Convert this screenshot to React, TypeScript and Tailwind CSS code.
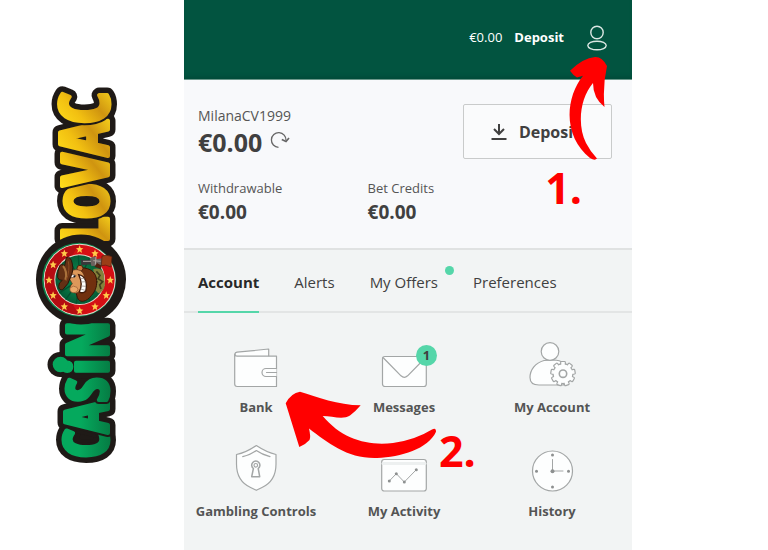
import { useState } from "react";
import type { ReactNode } from "react";

interface Tab {
  id: string;
  label: string;
  hasNews?: boolean;
}

interface Shortcut {
  label: string;
  icon: ReactNode;
  badge?: number;
}

interface LogoLetter {
  char: string;
  size: number;
  x: number;
  y: number;
  fill: string;
}

const tabs: Tab[] = [
  { id: "account", label: "Account" },
  { id: "alerts", label: "Alerts" },
  { id: "offers", label: "My Offers", hasNews: true },
  { id: "preferences", label: "Preferences" },
];

// The wordmark reads upwards: x is the baseline, y is where the letter starts
const letters: LogoLetter[] = [
  { char: "C", size: 62, x: 108, y: 458, fill: "url(#green)" },
  { char: "A", size: 60, x: 108, y: 433, fill: "url(#green)" },
  { char: "S", size: 58, x: 108, y: 402, fill: "url(#green)" },
  { char: "i", size: 60, x: 108, y: 374, fill: "url(#green)" },
  { char: "N", size: 58, x: 108, y: 358, fill: "url(#green)" },
  { char: "L", size: 64, x: 108, y: 243, fill: "url(#gold)" },
  { char: "O", size: 60, x: 108, y: 219, fill: "url(#gold)" },
  { char: "V", size: 64, x: 108, y: 186, fill: "url(#gold)" },
  { char: "A", size: 66, x: 108, y: 156, fill: "url(#gold)" },
  { char: "C", size: 68, x: 109, y: 124, fill: "url(#gold)" },
];

const starAngles = [0, 30, 60, 90, 120, 150, 180, 210, 240, 270, 300];

function Letter({ letter, stroke, width }: { letter: LogoLetter; stroke: string; width: number }) {
  return (
    <text
      transform={`translate(${letter.x} ${letter.y}) rotate(-90)`}
      fontSize={letter.size}
      fill={letter.fill}
      stroke={stroke}
      strokeWidth={width}
      strokeLinejoin="round"
      className="font-['Open_Sans_Condensed','Roboto_Condensed',sans-serif] font-bold"
    >
      {letter.char}
    </text>
  );
}

function Logo() {
  return (
    <svg viewBox="30 80 105 390" className="w-[105px] shrink-0" role="img" aria-label="Casino Lovac">
      <defs>
        <linearGradient id="gold" x1="0" y1="0" x2="0.3" y2="1">
          <stop offset="0.2" stopColor="#ffdf1c" />
          <stop offset="0.5" stopColor="#f2c011" />
          <stop offset="0.75" stopColor="#cf9410" />
          <stop offset="1" stopColor="#f0c81a" />
        </linearGradient>
        <linearGradient id="green" x1="0" y1="0" x2="0" y2="1">
          <stop offset="0.45" stopColor="#05a95d" />
          <stop offset="0.95" stopColor="#066b3a" />
        </linearGradient>
        <radialGradient id="field">
          <stop offset="0.2" stopColor="#0a8a50" />
          <stop offset="1" stopColor="#045b35" />
        </radialGradient>
      </defs>
      <path d="M76 105h26v130h-26zM76 320h26v128h-26z" fill="#1f1a17" />
      <circle cx="60" cy="364.5" r="12.500" fill="#1f1a17" />
      {letters.map((letter, i) => (
        <Letter key={i} letter={letter} stroke="#1f1a17" width={15} />
      ))}
      {letters.map((letter, i) => (
        <g key={i}>
          <Letter letter={letter} stroke="#1f1a17" width={8} />
          <Letter letter={letter} stroke={letter.fill} width={4} />
        </g>
      ))}
      <circle cx="60.500" cy="364.5" r="7.800" fill="#05a95d" />

      <circle cx="81" cy="279.5" r="45" fill="#1f1a17" />
      <g transform="translate(30 200) scale(0.3333)">
        <circle cx="147" cy="239" r="111" fill="#0b7f49" />
        <circle cx="149" cy="239" r="108" fill="#e9d5cd" />
        <circle cx="149" cy="239" r="105" fill="#d40f14" />
        <path d="M149 134a105 105 0 0 0 0 210a160 160 0 0 1 0-210z" fill="#b50c12" />
        <circle cx="149" cy="239" r="76" fill="#e9d5cd" />
        <circle cx="149" cy="239" r="73" fill="url(#field)" />
        <g stroke="#04502f" strokeWidth="4">
          <path d="M149 239L115 175M149 239L145 167M149 239L178 174M149 239L90 196M149 239L88 279M149 239L107 299M149 239L139 311M149 239L180 304M149 239L212 275" />
        </g>
        {starAngles.map((angle) => (
          <g key={angle} transform={`rotate(${angle} 149 239)`}>
            <path
              d="M241 228l3 8 8 1-6 5 2 9-7-5-7 5 2-9-6-5 8-1z"
              fill="#ffc94a"
              transform={`rotate(${-angle} 241 239)`}
            />
          </g>
        ))}
        {/* jacket */}
        <path d="M190 207q22-5 31 12l4 34q-3 24-20 27l-12-13z" fill="#84813b" />
        <path d="M199 214l11 12-6 10 14 9-9 10 4 12M190 243l13 3" fill="none" stroke="#403d1c" strokeWidth="5" />
        {/* rifle */}
        <path d="M152 180l29-1 2 14-29 3z" fill="#38383a" />
        <path d="M180 174l17-5 2 8 20-2-3 22-32 1z" fill="#6b625f" />
        <path d="M159 184h24M190 182l22 2M198 171l-2 23" stroke="#b0a8a1" strokeWidth="3" />
        <path d="M216 168q14-5 30 2l-3 31q-17-9-29-4z" fill="#9b3d17" stroke="#51200e" strokeWidth="2" />
        <path d="M201 189l14 8-2 10-19-7z" fill="#51200e" />
        {/* beard and face */}
        <path d="M145 204c27-3 49 7 54 30c4 21-2 39-15 53c-15 19-32 21-39 11c-6-8-3-17-11-25z" fill="#71300f" stroke="#351407" strokeWidth="3" />
        <circle cx="150" cy="205" r="9" fill="#c8763c" stroke="#4a210d" strokeWidth="3" />
        <path d="M121 216q13-12 31-4q15 10 10 33q-5 25-17 32q-10 7-18-3q-13-10 0-23l-7-12z" fill="#dc985a" stroke="#593018" strokeWidth="2" />
        <path d="M146 224q14 2 20 16q6 15 1 34q-10 8-19 1q12-22-2-51z" fill="#fff" stroke="#421b0a" strokeWidth="4" />
        <path d="M150 235l14 1M154 246l14-1M154 258l14 1M151 267l14 4" stroke="#8c7d75" strokeWidth="2" />
        <path d="M122 226q8-6 16 1q-2 8-14 6z" fill="#fff" stroke="#593018" strokeWidth="2" />
        <circle cx="133" cy="229" r="3" fill="#111" />
        <path d="M120 264q10-10 21-2q7 8-2 14q-15 6-19-5z" fill="#eba969" stroke="#94572f" strokeWidth="2" />
        {/* hat */}
        <path d="M109 178q14-4 18 20q4 23-5 38q-5 22-24 39q-10 3-12-9q-1-12 11-19q-12 1-14-9q-1-20 6-34q4-8 15-1z" fill="#633014" stroke="#2d1408" strokeWidth="3" transform="translate(0 -6)" />
        <path d="M99 198q14 16 7 41" fill="none" stroke="#a9713b" strokeWidth="6" />
        <path d="M115 184q6 26-7 59" fill="none" stroke="#8c4b21" strokeWidth="3" />
      </g>
    </svg>
  );
}

function Icon({ children }: { children: ReactNode }) {
  return (
    <svg
      viewBox="0 0 50 50"
      className="size-[50px] overflow-visible"
      fill="#fdfefe"
      stroke="#a3a6a6"
      strokeWidth="1.2"
      strokeLinecap="round"
      strokeLinejoin="round"
      aria-hidden="true"
    >
      {children}
    </svg>
  );
}

const gearTeeth = [0, 40, 80, 120, 160, 200, 240, 280, 320];

const shortcuts: Shortcut[] = [
  {
    label: "Bank",
    icon: (
      <Icon>
        <path d="M4 15.5V13q0-1.500 2-1.800L37.700 8v7.500" />
        <path d="M3.700 13q0 2.200 2.500 2.200h39.300V45.500H6.200q-2.500 0-2.500-2.500z" />
        <path d="M45.500 27.500H35a4 4 0 0 0 0 8h10.500M45.500 31.500h-10" />
      </Icon>
    ),
  },
  {
    label: "Messages",
    badge: 1,
    icon: (
      <Icon>
        <rect x="3.500" y="15.500" width="43.800" height="30" rx="2.500" />
        <path d="M4 16.500l18 18.300q3.300 3 6.600 0l18-18.300" />
      </Icon>
    ),
  },
  {
    label: "My Account",
    icon: (
      <Icon>
        <path d="M17 19.500C8 22 3 29 3 36.500q0 7.500 9 7.500h25V22q-5-3-9-3z" />
        <circle cx="23" cy="10.500" r="8.800" />
        <path d="M31 23q2-3 6-2v8z" stroke="none" />
        {gearTeeth.map((angle) => (
          <rect key={angle} x="33.700" y="20.500" width="4.600" height="8" rx="0.800" transform={`rotate(${angle} 36 32.700)`} />
        ))}
        <circle cx="36" cy="32.700" r="10" />
        {gearTeeth.map((angle) => (
          <rect key={angle} x="34.300" y="21.700" width="3.400" height="3" stroke="none" transform={`rotate(${angle} 36 32.700)`} />
        ))}
        <circle cx="36" cy="32.700" r="3.700" strokeWidth="1.600" />
      </Icon>
    ),
  },
  {
    label: "Gambling Controls",
    icon: (
      <Icon>
        <path d="M25.300 0.500Q36 7.500 45 9.500V19q0 17-14 23.500l-5.700 2.800-5.700-2.800Q5.500 36 5.500 19V9.500Q15 7.500 25.300 0.500z" />
        <path d="M11.700 11.700Q20 9.500 25.300 5.500 31 9.500 39 11.700" fill="none" />
        <path d="M22.400 23.500a4.100 4.100 0 1 1 4.800 0l1.500 8.200h-8z" strokeWidth="1.500" />
        <circle cx="24.800" cy="20.300" r="1.800" />
      </Icon>
    ),
  },
  {
    label: "My Activity",
    icon: (
      <Icon>
        <rect x="2.700" y="14.500" width="44.600" height="31.500" rx="2.500" />
        <path d="M4 18.500h42" stroke="#edf0f0" strokeWidth="3" />
        <path d="M10.300 36l7-7.300 8 8.300 12-12.300" fill="none" strokeWidth="1" />
        <g fill="#8d9090" stroke="none">
          <circle cx="10.300" cy="36" r="1.500" />
          <circle cx="17.300" cy="28.700" r="1.500" />
          <circle cx="25.300" cy="37" r="1.500" />
          <circle cx="37.300" cy="24.700" r="1.500" />
        </g>
      </Icon>
    ),
  },
  {
    label: "History",
    icon: (
      <Icon>
        <circle cx="25.500" cy="26" r="20" />
        <path d="M25.500 26V14.500M25.500 26h10.500" strokeWidth="1" />
        <g fill="#8d9090" stroke="none">
          <circle cx="25.500" cy="26.300" r="2" />
          <circle cx="25.500" cy="10" r="1.500" />
          <circle cx="25.500" cy="42" r="1.500" />
          <circle cx="9.500" cy="26.300" r="1.500" />
          <circle cx="41.500" cy="26.300" r="1.500" />
        </g>
      </Icon>
    ),
  },
];

function Header() {
  return (
    <header className="flex h-20 items-center justify-end gap-3 border-b border-[#6c988b] bg-[#025440] pr-6 pb-1 text-[13px] text-white shadow-[inset_0_-4px_4px_-2px_#024a38]">
      <span>€0.00</span>
      <a href="#deposit" className="font-bold">
        Deposit
      </a>
      <button type="button" aria-label="Account menu" className="ml-2.5">
        <svg viewBox="0 0 22 26" className="h-[26px] w-[22px]" fill="none" stroke="#dbe7e3" strokeWidth="1.4">
          <circle cx="11" cy="7.500" r="6.200" />
          <ellipse cx="11" cy="20.500" rx="9.200" ry="4.300" />
        </svg>
      </button>
    </header>
  );
}

function Balance() {
  return (
    <section className="border-b-2 border-[#e0e2e2] bg-[#f8f9fb] py-6 pr-5 pl-3.5 text-[#404040]">
      <div className="flex items-start justify-between">
        <div>
          <div className="text-sm leading-6 text-[#555]">MilanaCV1999</div>
          <div className="flex items-center gap-2 text-[25px] leading-7 font-bold">
            €0.00
            <button type="button" aria-label="Refresh balance" className="-mt-1">
              <svg viewBox="0 0 20 18" className="h-[18px] w-5" fill="none" stroke="#666" strokeWidth="1.300">
                <path d="M8.500 16.300A7.300 7.300 0 1 1 16 9.500" />
                <path d="M11.800 8.500l4.200 2 3-3.500" strokeWidth="1.700" />
              </svg>
            </button>
          </div>
        </div>
        <button
          type="button"
          className="flex h-[55px] w-[149px] items-center justify-center gap-3 rounded-xs border border-[#c9cbcb] bg-[#fafbfc] pr-1 text-base font-bold"
        >
          <svg viewBox="0 0 16 18" className="h-[18px] w-4" fill="none" stroke="#404040" strokeWidth="2">
            <path d="M8 1v10M3 6l5 5 5-5M0.500 16h15" />
          </svg>
          Deposit
        </button>
      </div>
      <dl className="mt-[17px] grid grid-cols-[170fr_245fr]">
        <div>
          <dt className="text-[13px] leading-6 text-[#555]">Withdrawable</dt>
          <dd className="text-[19px] leading-6 font-bold">€0.00</dd>
        </div>
        <div>
          <dt className="text-[13px] leading-6 text-[#555]">Bet Credits</dt>
          <dd className="text-[19px] leading-6 font-bold">€0.00</dd>
        </div>
      </dl>
    </section>
  );
}

export default function App() {
  const [activeTab, setActiveTab] = useState("account");

  return (
    <div className="grid min-h-screen grid-cols-[184fr_448fr_136fr] bg-white font-['Open_Sans','Noto_Sans',sans-serif]">
      <aside className="flex items-start justify-center pt-20 pr-5">
        <Logo />
      </aside>

      <main className="relative bg-[#f2f4f4]">
        <Header />
        <Balance />

        <nav className="flex h-[63px] gap-[35px] border-b-2 border-[#e3e5e5] pl-3.5 text-[15px] text-[#404040]">
          {tabs.map((tab) => (
            <button
              key={tab.id}
              type="button"
              onClick={() => setActiveTab(tab.id)}
              className={`relative -mb-0.5 border-b-2 pt-1 whitespace-nowrap ${
                activeTab === tab.id ? "border-[#55d6a9] font-bold text-[#282828]" : "border-transparent"
              }`}
            >
              {tab.label}
              {tab.hasNews && <span className="absolute top-4 -right-4 size-[9px] rounded-full bg-[#55d6a9]" />}
            </button>
          ))}
        </nav>

        <div className="grid grid-cols-3 gap-x-5 gap-y-7 pt-7 pr-4 pb-4 pl-2">
          {shortcuts.map((item) => (
            <a key={item.label} href="#account" className="flex flex-col items-center gap-1.5">
              <span className="relative">
                {item.icon}
                {item.badge && (
                  <span className="absolute top-1 -right-2 flex size-[21px] items-center justify-center rounded-full bg-[#55d6a9] text-[13px] font-bold text-[#404040]">
                    {item.badge}
                  </span>
                )}
              </span>
              <span className="text-[13px] leading-5 font-bold whitespace-nowrap text-[#545454]">{item.label}</span>
            </a>
          ))}
        </div>

        {/* step markers over the panel */}
        <div className="pointer-events-none absolute top-14 right-6 text-[#ff0000]">
          <svg viewBox="569 56 39 105" className="ml-auto h-[105px] w-[39px]" fill="currentColor">
            <path d="M570 70.700Q583 58 595 57Q602 56.500 607 66Q602.500 86 604.500 107Q593 98 593 83C580 98 577 125 586 143Q590 151 597 158.500Q595 161 590 158C571 143 565 118 573 94Q577 83 583 75.700L577 77.500Q573 75 570 70.700z" />
          </svg>
          <div className="pr-[26px] text-[43px] leading-[54px] font-bold">1.</div>
        </div>
        <div className="pointer-events-none absolute top-[390px] left-[101px] flex items-end gap-0.5 text-[#ff0000]">
          <svg viewBox="285 390 152 70" className="h-[70px] w-[152px]" fill="currentColor">
            <path d="M285.700 403.300Q291 393 300 391.700C317 397 338 405 360.700 405.300Q355 412 350 415.500C343 420 332 416 322.700 416C342 439 367 446 393 443Q415 440 432 429.500Q436 427 436 431.700C428 449 401 457 377 458C348 459 328 443 309 428.500Q311 437 309.500 440Q305 445 299.300 447Z" />
          </svg>
          <div className="-mb-[18px] text-[43px] leading-[54px] font-bold">2.</div>
        </div>
      </main>
    </div>
  );
}
